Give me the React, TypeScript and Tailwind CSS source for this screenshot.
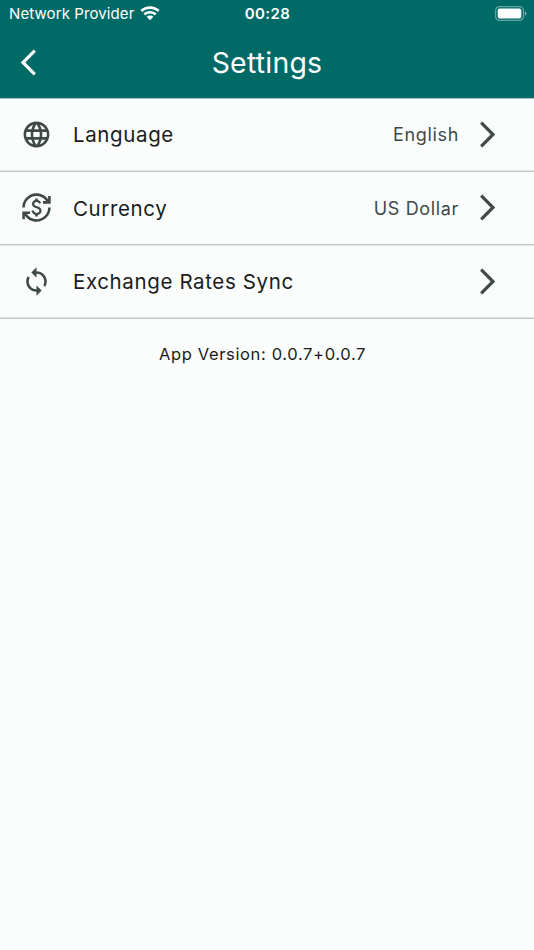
import type { ReactNode } from "react";
import {
  MdArrowBackIosNew,
  MdArrowForwardIos,
  MdCurrencyExchange,
  MdLanguage,
  MdSync,
} from "react-icons/md";

interface SettingsRowProps {
  icon: ReactNode;
  label: string;
  value?: string;
}

function WifiIcon() {
  return (
    <svg width="20" height="15" viewBox="0 0 20 15" fill="#ffffff">
      <path d="M10 0.3C13.7 0.3 17.1 1.7 19.6 4.1L17.8 6.1C15.7 4.1 13 3 10 3S4.3 4.1 2.2 6.1L0.4 4.1C2.9 1.7 6.3 0.3 10 0.3Z" />
      <path d="M10 4.9C12.5 4.9 14.8 5.9 16.5 7.5L14.7 9.5C13.5 8.3 11.8 7.6 10 7.6S6.5 8.3 5.3 9.5L3.5 7.5C5.2 5.9 7.5 4.9 10 4.9Z" />
      <path d="M10 9.5C11.3 9.5 12.5 10 13.3 10.8L10 14.3L6.7 10.8C7.5 10 8.7 9.5 10 9.5Z" />
    </svg>
  );
}

function BatteryIcon() {
  return (
    <svg width="32" height="15" viewBox="0 0 32 15" fill="none">
      <rect x="0.6" y="0.6" width="27.8" height="13.8" rx="4" stroke="#ffffff" strokeOpacity="0.4" strokeWidth="1.2" />
      <rect x="2.7" y="2.5" width="23.6" height="10" rx="2" fill="#ffffff" />
      <path d="M29.8 5.2C30.8 5.6 31.4 6.5 31.4 7.5S30.8 9.4 29.8 9.8Z" fill="#ffffff" fillOpacity="0.5" />
    </svg>
  );
}

function StatusBar() {
  return (
    <div className="grid h-[27px] grid-cols-3 items-center pr-[7px] pl-[9px] text-white">
      <div className="flex items-center gap-[6px] whitespace-nowrap">
        <span className="pt-px text-[15px] tracking-[0.1px]">Network Provider</span>
        <WifiIcon />
      </div>
      <span className="pt-px pr-px text-center text-[15px] font-semibold tracking-[0.4px]">00:28</span>
      <div className="flex justify-end">
        <BatteryIcon />
      </div>
    </div>
  );
}

function SettingsRow({ icon, label, value }: SettingsRowProps) {
  return (
    <div className="flex h-[73.6px] items-center border-b border-[#bec9c7] pr-[31px] pl-[21px] odd:shadow-[inset_0_-1px_0_#e0e7e5] even:shadow-[0_1px_0_#e0e7e5]">
      <span className="text-[#3f4947]">{icon}</span>
      <span className="ml-[21px] flex-1 pt-[2.5px] text-[20.5px] tracking-[0.62px] text-[#191c1c]">{label}</span>
      {value && (
        <span className="mr-[13px] pt-px text-[18px] tracking-[0.65px] text-[#3f4947]">{value}</span>
      )}
      <MdArrowForwardIos size={31} className="text-[#3f4947]" />
    </div>
  );
}

export default function App() {
  return (
    <div className="min-h-[950px] w-full bg-[#fafdfc] font-['Inter',sans-serif] antialiased">
      <header className="h-[98px] bg-[#006a67] shadow-[0_1px_0_#a3cac8]">
        <StatusBar />
        <div className="grid h-[71px] grid-cols-[31px_1fr_31px] items-center px-[13px] text-white">
          <MdArrowBackIosNew size={31} />
          <h1 className="pt-[2px] text-center text-[28.4px] tracking-[0.25px]">Settings</h1>
        </div>
      </header>

      <main>
        <SettingsRow icon={<MdLanguage size={31} />} label="Language" value="English" />
        <SettingsRow icon={<MdCurrencyExchange size={31} />} label="Currency" value="US Dollar" />
        <SettingsRow icon={<MdSync size={31} />} label="Exchange Rates Sync" />
        <p className="mt-[23px] pr-[9px] text-center text-[16.5px] tracking-[0.65px] text-[#191c1c]">
          App Version: 0.0.7+0.0.7
        </p>
      </main>
    </div>
  );
}
